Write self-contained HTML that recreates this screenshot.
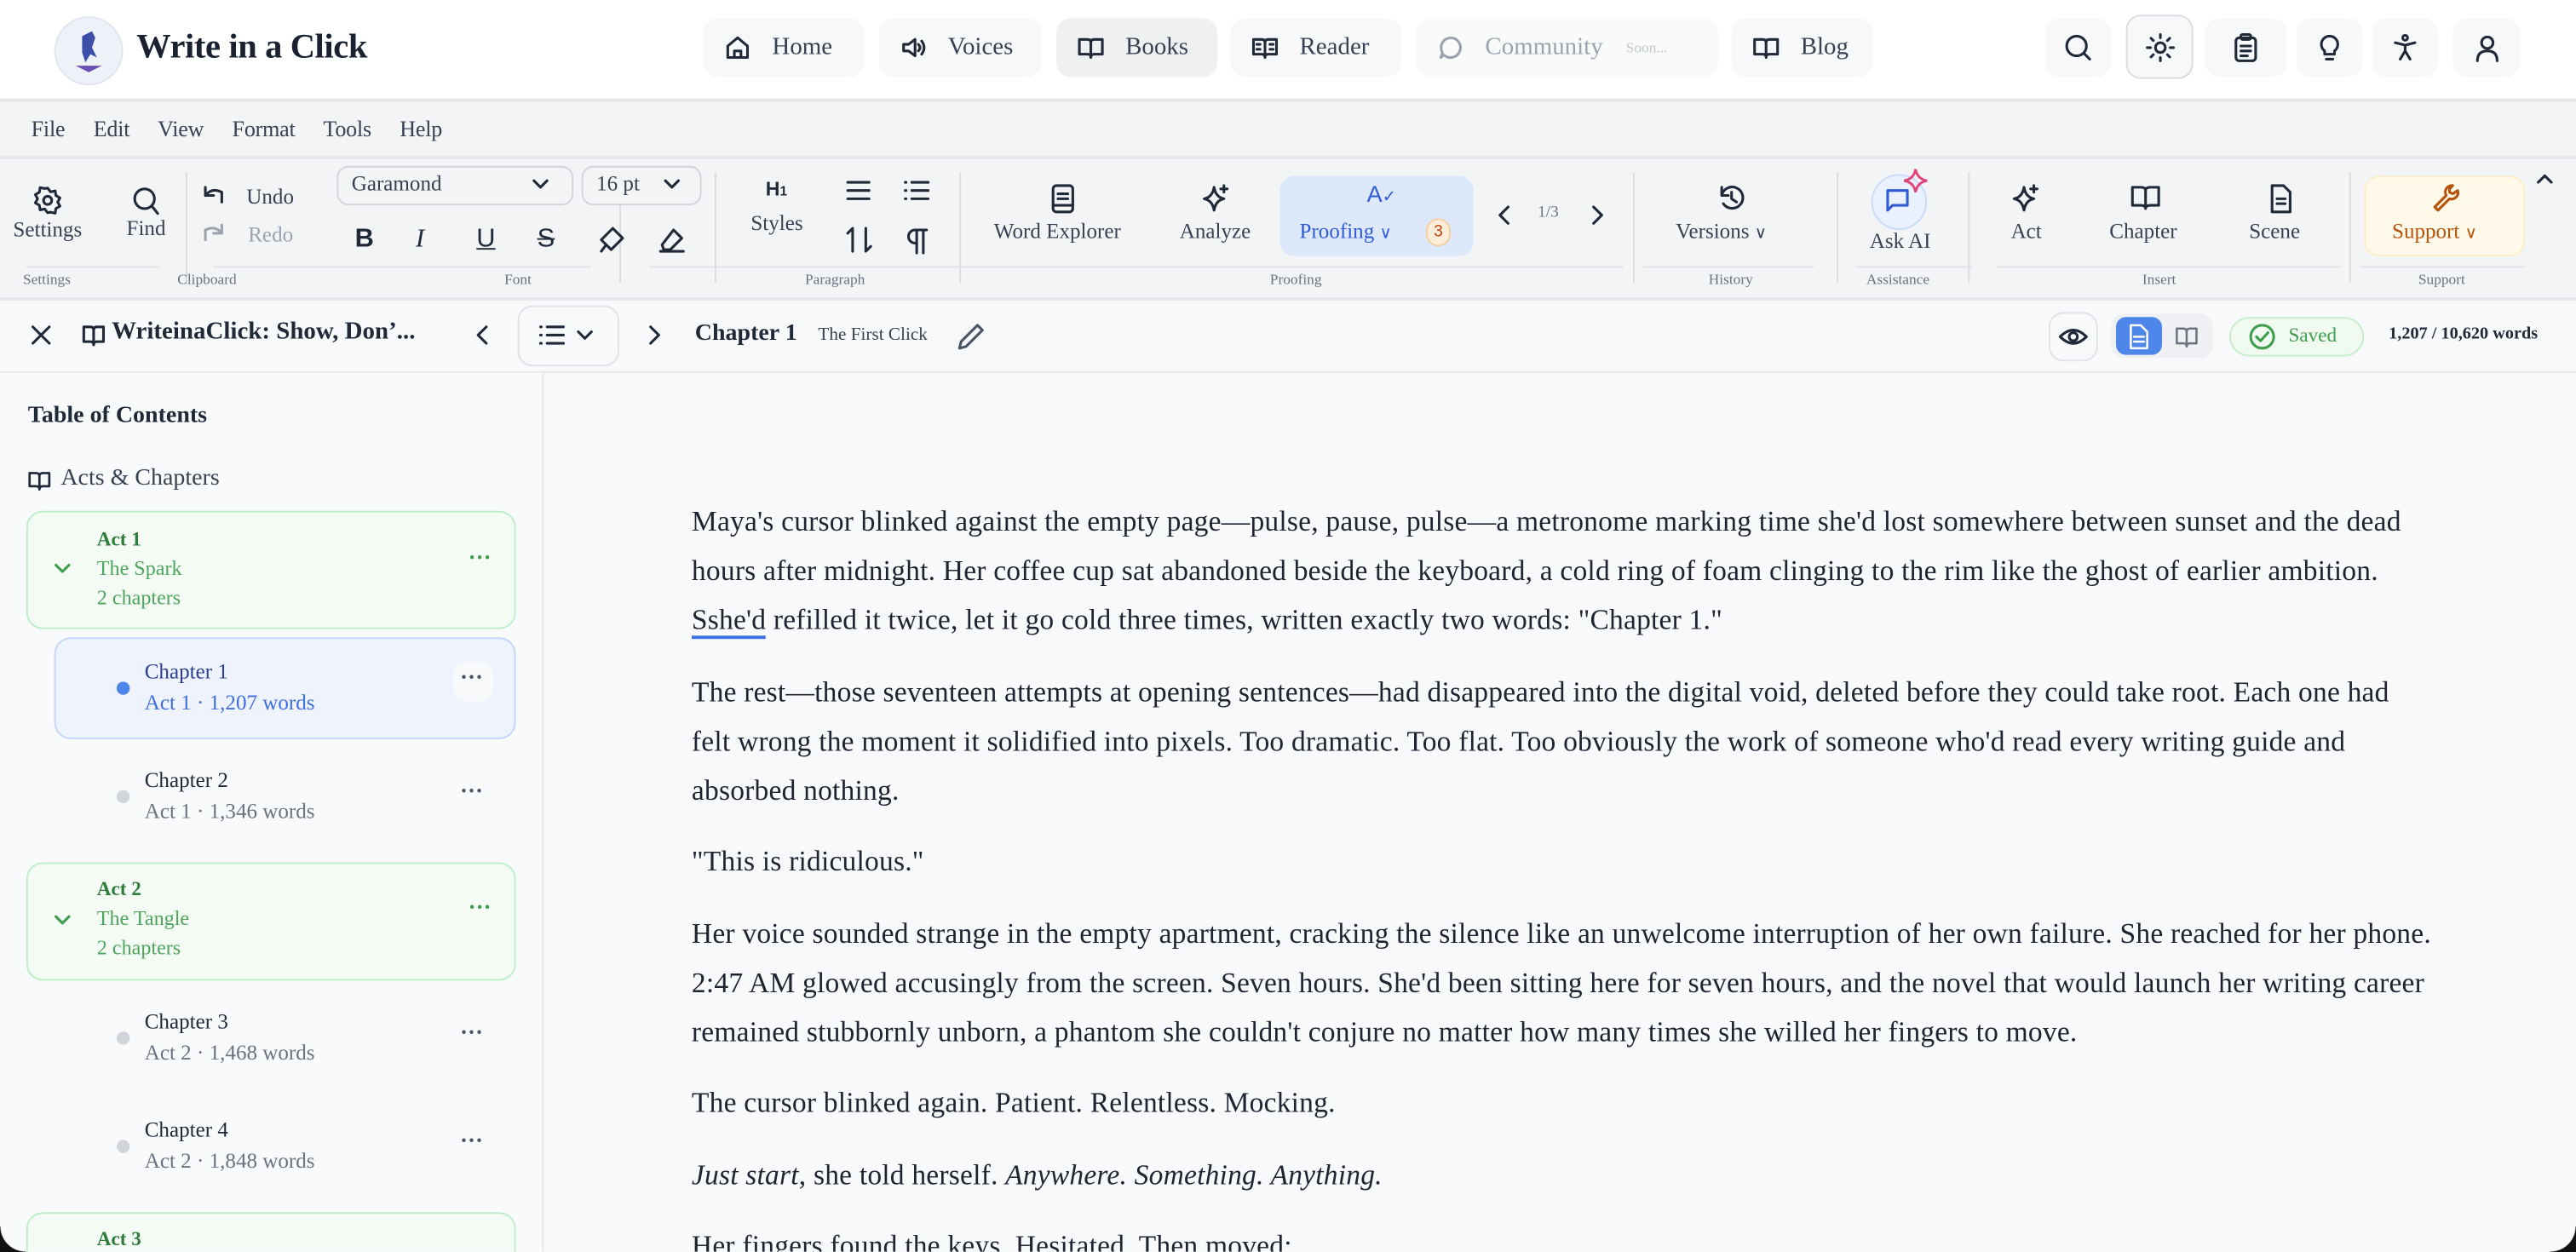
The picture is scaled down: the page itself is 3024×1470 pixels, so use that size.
<!DOCTYPE html>
<html><head><meta charset="utf-8">
<style>
*{box-sizing:border-box;margin:0;padding:0}
html,body{width:3024px;height:1470px;overflow:hidden;background:#f8f9fb}
#w{position:absolute;left:0;top:0;width:1568px;height:762px;transform:scale(1.928571);transform-origin:0 0;font-family:"Liberation Sans",sans-serif;color:#1f2937;background:#f8f9fb;border-radius:0 0 14px 14px;overflow:hidden}
.a{position:absolute}
svg{display:block}
.ic{fill:none;stroke:#1f2937;stroke-width:1.6;stroke-linecap:round;stroke-linejoin:round}
.pill{position:absolute;top:11px;height:36px;border-radius:9px;background:#f7f8fa;display:flex;align-items:center;padding-left:13px;font-size:15px;color:#374151;font-family:"Liberation Serif",serif}
.pill svg{margin-right:13px}
.rb{position:absolute;top:11px;width:40px;height:36px;border-radius:9px;background:#f7f8fa;display:flex;align-items:center;justify-content:center}
.tb{font-family:"Liberation Serif",serif;font-size:13px;color:#374151}
.gl{position:absolute;top:165px;font-size:9px;color:#6b7280;font-family:"Liberation Serif",serif}
.sep{position:absolute;top:105px;width:1px;height:67px;background:#d9dce1}
.line{position:absolute;top:162px;height:1px;background:#dfe2e6}
.doc p{font-family:"Liberation Serif",serif;font-size:17.4px;line-height:30px;color:#1f2430;white-space:nowrap;margin-bottom:13.5px;letter-spacing:0.1px}
.side{font-family:"Liberation Serif",serif}
.dots{position:absolute;font-size:14px;letter-spacing:0;color:#4b5563;font-weight:bold}
</style></head><body><div id="w">
<!-- NAV -->
<div class="a" style="left:0;top:0;width:1568px;height:62px;background:#fff;border-bottom:2px solid #e5e7eb"></div>
<div class="a" style="left:33px;top:10px;width:42px;height:42px;border-radius:50%;background:#eef1f7;border:1px solid #e1e5ee"></div>
<svg class="a" style="left:42px;top:16px" width="24" height="30"><path d="M8 6 l6 -3 l2 4 l-2 6 l3 6 l-4 -2 l-3 5 l-2 -6 z" fill="#3b4fa8"/><path d="M4 24 h16 l-8 4z" fill="#6a4fb6"/></svg>
<div class="a" style="left:83px;top:16px;font-family:'Liberation Serif',serif;font-size:21px;font-weight:bold;color:#1a2130;letter-spacing:-0.2px">Write in a Click</div>
<div class="pill" style="left:428px;width:98px"><svg width="16" height="16" class="ic"><path d="M2 7 L8 2 L14 7 V14 H2 Z M6 14 V10 H10 V14"/></svg>Home</div>
<div class="pill" style="left:535px;width:99px"><svg width="16" height="16" class="ic"><path d="M2 6 H5 L9 3 V13 L5 10 H2 Z M11 6 Q13 8 11 10 M13 4 Q16 8 13 12"/></svg>Voices</div>
<div class="pill" style="left:643px;width:98px;background:#eff0f2"><svg width="16" height="16" class="ic"><path d="M1 3 H6 Q8 3 8 5 V14 Q8 12 6 12 H1Z M15 3 H10 Q8 3 8 5 V14 Q8 12 10 12 H15Z"/></svg>Books</div>
<div class="pill" style="left:749px;width:104px"><svg width="16" height="16" class="ic"><path d="M1 3 H6 Q8 3 8 5 V14 Q8 12 6 12 H1Z M15 3 H10 Q8 3 8 5 V14 Q8 12 10 12 H15Z M3 6H5 M3 9H5 M11 6H13 M11 9H13"/></svg>Reader</div>
<div class="pill" style="left:862px;width:184px;background:#f9fafa;color:#9ca3af"><svg width="16" height="16" class="ic" style="stroke:#9ca3af"><path d="M8 2 A6 6 0 1 1 4 12.5 L2 14 L3 11 A6 6 0 0 1 8 2Z"/></svg>Community<span style="font-size:9px;margin-left:14px;color:#c0c4ca">Soon...</span></div>
<div class="pill" style="left:1054px;width:86px"><svg width="16" height="16" class="ic"><path d="M1 3 H6 Q8 3 8 5 V14 Q8 12 6 12 H1Z M15 3 H10 Q8 3 8 5 V14 Q8 12 10 12 H15Z"/></svg>Blog</div>
<div class="rb" style="left:1245px"><svg width="18" height="18" class="ic"><circle cx="8" cy="8" r="6"/><path d="M12.5 12.5 L16 16"/></svg></div>
<div class="rb" style="left:1294px;width:41px;height:39px;top:9px;border:1px solid #d9dce1;background:#f7f8fa"><svg width="18" height="18" class="ic"><circle cx="9" cy="9" r="3"/><path d="M9 1v2M9 15v2M1 9h2M15 9h2M3.3 3.3l1.4 1.4M13.3 13.3l1.4 1.4M3.3 14.7l1.4-1.4M13.3 4.7l1.4-1.4"/></svg></div>
<div class="rb" style="left:1342px;width:50px"><svg width="18" height="18" class="ic"><rect x="3" y="3" width="12" height="14" rx="2"/><rect x="6" y="1" width="6" height="3" rx="1"/><path d="M6 8h6M6 11h6M6 14h4"/></svg></div>
<div class="rb" style="left:1398px"><svg width="18" height="18" class="ic"><path d="M6 11 A5 5 0 1 1 12 11 V13 H6Z M7 16h4"/></svg></div>
<div class="rb" style="left:1444px"><svg width="18" height="18" class="ic"><circle cx="9" cy="3" r="1.5"/><path d="M3 6 L9 7.5 L15 6 M9 7.5 V11 L6 16 M9 11 L12 16"/></svg></div>
<div class="rb" style="left:1493px;width:41px"><svg width="18" height="18" class="ic"><circle cx="9" cy="6" r="3.5"/><path d="M3 17 Q3 11 9 11 Q15 11 15 17"/></svg></div>
<!-- MENU -->
<div class="a" style="left:0;top:62px;width:1568px;height:120px;background:#f3f4f6"></div>
<div class="a" style="left:0;top:95px;width:1568px;height:2px;background:#e5e7eb"></div>
<div class="a tb" style="left:19px;top:71px;word-spacing:14px;font-size:13.5px;letter-spacing:-0.1px">File Edit View Format Tools Help</div>
<!-- TOOLBAR -->
<svg class="a ic" style="left:20px;top:113px" width="18" height="18"><circle cx="9" cy="9" r="2.5"/><path d="M9 1.5 l1.8 2.3 2.8-.6.4 2.8 2.5 1.5-1.4 2.5 1.4 2.5-2.5 1.5-.4 2.8-2.8-.6L9 16.5l-1.8-2.3-2.8.6-.4-2.8-2.5-1.5L2.9 8 1.5 5.5 4 4l.4-2.8 2.8.6z"/></svg>
<div class="a tb" style="left:8px;top:132px">Settings</div>
<div class="gl" style="left:14px">Settings</div>
<div class="line" style="left:16px;width:81px"></div>
<div class="sep" style="left:113px"></div>
<svg class="a ic" style="left:79px;top:112px" width="20" height="20"><circle cx="9" cy="9" r="6"/><path d="M13.5 13.5 L17 18"/></svg>
<div class="a tb" style="left:77px;top:131px">Find</div>
<svg class="a ic" style="left:121px;top:111px" width="18" height="16"><path d="M4 3 V8 H9 M4 8 Q8 3 14 6 V12"/></svg>
<div class="a tb" style="left:150px;top:112px">Undo</div>
<svg class="a ic" style="left:121px;top:134px;stroke:#9ca3af" width="18" height="16"><path d="M14 3 V8 H9 M14 8 Q10 3 4 6 V12"/></svg>
<div class="a tb" style="left:151px;top:135px;color:#9ca3af">Redo</div>
<div class="gl" style="left:108px">Clipboard</div>
<div class="line" style="left:130px;width:230px"></div>
<div class="sep" style="left:377px"></div>
<div class="a" style="left:205px;top:101px;width:144px;height:24px;border:1px solid #d1d5db;border-radius:7px;background:#f3f4f6"></div>
<div class="a tb" style="left:214px;top:104px">Garamond</div>
<svg class="a ic" style="left:323px;top:107px" width="12" height="10"><path d="M2 3 L6 7 L10 3"/></svg>
<div class="a" style="left:354px;top:101px;width:73px;height:24px;border:1px solid #d1d5db;border-radius:7px;background:#f3f4f6"></div>
<div class="a tb" style="left:363px;top:104px">16 pt</div>
<svg class="a ic" style="left:403px;top:107px" width="12" height="10"><path d="M2 3 L6 7 L10 3"/></svg>
<div class="a" style="left:216px;top:137px;font-size:16px;font-weight:bold;font-family:'Liberation Sans'">B</div>
<div class="a" style="left:253px;top:137px;font-size:16px;font-style:italic;font-family:'Liberation Serif'">I</div>
<div class="a" style="left:290px;top:137px;font-size:16px;text-decoration:underline">U</div>
<div class="a" style="left:327px;top:137px;font-size:16px;text-decoration:line-through">S</div>
<svg class="a ic" style="left:363px;top:137px" width="18" height="18"><path d="M10 2 L16 8 L9 15 L3 9Z M6 12 L3 16"/></svg>
<svg class="a ic" style="left:400px;top:137px" width="18" height="18"><path d="M10 3 L15 8 L8 15 H4 L3 12Z M2 16 H16"/></svg>
<div class="gl" style="left:307px">Font</div>
<div class="line" style="left:395px;width:430px"></div>
<div class="sep" style="left:435px"></div>
<div class="a" style="left:466px;top:108px;font-size:12px;font-weight:bold">H<span style="font-size:8px">1</span></div>
<div class="a tb" style="left:457px;top:128px">Styles</div>
<svg class="a ic" style="left:514px;top:108px" width="18" height="16"><path d="M2 3h13M2 8h13M2 13h13"/></svg>
<svg class="a ic" style="left:549px;top:108px" width="18" height="16"><path d="M6 3h10M6 8h10M6 13h10M2 3h.5M2 8h.5M2 13h.5"/></svg>
<svg class="a ic" style="left:514px;top:137px" width="18" height="18"><path d="M5 16 V2 L2 5 M13 2 V16 L16 13"/></svg>
<svg class="a ic" style="left:549px;top:138px" width="18" height="18"><path d="M13 2 V16 M9 2 V16 M15 2 H8 A4 4 0 0 0 8 10 H9"/></svg>
<div class="gl" style="left:490px">Paragraph</div>
<div class="line" style="left:445px;width:130px"></div>
<div class="sep" style="left:584px"></div>
<svg class="a ic" style="left:638px;top:111px" width="18" height="20"><rect x="3" y="2" width="12" height="16" rx="2"/><path d="M6 7h6M6 10h6M3 14h12"/></svg>
<div class="a tb" style="left:605px;top:133px">Word Explorer</div>
<svg class="a ic" style="left:731px;top:111px" width="18" height="18"><path d="M8 3 Q9 9 14 10 Q9 11 8 17 Q7 11 2 10 Q7 9 8 3Z M14 2v4M12 4h4"/></svg>
<div class="a tb" style="left:718px;top:133px">Analyze</div>
<div class="a" style="left:779px;top:107px;width:118px;height:49px;background:#dde8fb;border-radius:9px"></div>
<div class="a" style="left:832px;top:110px;font-size:14px;color:#2f5bd6">A<span style="font-size:10px">&#x2713;</span></div>
<div class="a tb" style="left:791px;top:133px;color:#2f5bd6">Proofing <span style="font-size:10px">&#x2228;</span></div>
<div class="a" style="left:868px;top:133px;width:15px;height:17px;border-radius:8px;background:#fdeedc;border:1px solid #f6cf9e;color:#c2410c;font-size:10px;text-align:center;line-height:15px">3</div>
<svg class="a ic" style="left:910px;top:124px" width="12" height="14"><path d="M8 2 L3 7 L8 12"/></svg>
<div class="a" style="left:936px;top:124px;font-size:10px;color:#6b7280;font-family:'Liberation Serif'">1/3</div>
<svg class="a ic" style="left:966px;top:124px" width="12" height="14"><path d="M4 2 L9 7 L4 12"/></svg>
<div class="gl" style="left:773px">Proofing</div>
<div class="line" style="left:570px;width:418px"></div>
<div class="sep" style="left:994px"></div>
<svg class="a ic" style="left:1045px;top:111px" width="18" height="18"><path d="M3 8 A6.5 6.5 0 1 1 4 13 M3 3 V8 H7 M9 6 V10 L12 12"/></svg>
<div class="a tb" style="left:1020px;top:133px">Versions <span style="font-size:10px">&#x2228;</span></div>
<div class="gl" style="left:1040px">History</div>
<div class="line" style="left:1000px;width:104px"></div>
<div class="sep" style="left:1118px"></div>
<div class="a" style="left:1139px;top:106px;width:34px;height:34px;border-radius:50%;background:#eaf1fe;border:1px solid #c9dafb"></div>
<svg class="a ic" style="left:1147px;top:113px;stroke:#2f5bd6" width="18" height="18"><path d="M2 3 H14 V12 H5 L2 15Z"/></svg>
<svg class="a" style="left:1158px;top:102px" width="16" height="16"><path d="M8 1 Q9 7 15 8 Q9 9 8 15 Q7 9 1 8 Q7 7 8 1Z" fill="none" stroke="#e0457b" stroke-width="1.5"/></svg>
<div class="a tb" style="left:1138px;top:139px">Ask AI</div>
<div class="gl" style="left:1136px">Assistance</div>
<div class="line" style="left:1130px;width:70px"></div>
<div class="sep" style="left:1198px"></div>
<svg class="a ic" style="left:1224px;top:111px" width="18" height="18"><path d="M8 3 Q9 9 14 10 Q9 11 8 17 Q7 11 2 10 Q7 9 8 3Z M14 2v4M12 4h4"/></svg>
<div class="a tb" style="left:1224px;top:133px">Act</div>
<svg class="a ic" style="left:1297px;top:111px" width="18" height="18"><path d="M1 3 H6 Q9 3 9 5 V16 Q9 14 6 14 H1Z M17 3 H12 Q9 3 9 5 V16 Q9 14 12 14 H17Z"/></svg>
<div class="a tb" style="left:1284px;top:133px">Chapter</div>
<svg class="a ic" style="left:1379px;top:111px" width="18" height="20"><path d="M4 2 H11 L15 6 V18 H4Z M7 10h5M7 13h5"/></svg>
<div class="a tb" style="left:1369px;top:133px">Scene</div>
<div class="gl" style="left:1304px">Insert</div>
<div class="line" style="left:1215px;width:210px"></div>
<div class="sep" style="left:1430px"></div>
<div class="a" style="left:1439px;top:107px;width:98px;height:49px;background:#fef9e9;border:1px solid #fbeec6;border-radius:9px"></div>
<svg class="a ic" style="left:1479px;top:111px;stroke:#b45309" width="18" height="18"><path d="M14 2 A4 4 0 0 0 10 8 L3 15 L5 17 L12 10 A4 4 0 0 0 17 5 L14 7 L12 6 L12 4Z"/></svg>
<div class="a tb" style="left:1456px;top:133px;color:#b45309">Support <span style="font-size:10px">&#x2228;</span></div>
<div class="gl" style="left:1472px">Support</div>
<div class="line" style="left:1437px;width:100px"></div>
<svg class="a ic" style="left:1543px;top:104px" width="12" height="10"><path d="M2 7 L6 3 L10 7"/></svg>
<div class="a" style="left:0;top:181px;width:1568px;height:2px;background:#e5e7eb"></div>
<!-- CHAPTER BAR -->
<div class="a" style="left:0;top:226px;width:1568px;height:1px;background:#e5e7eb"></div>
<div class="a" style="left:9px;top:188px;width:32px;height:32px;border-radius:8px;background:#f8f9fb"></div>
<svg class="a ic" style="left:17px;top:196px" width="16" height="16"><path d="M3 3 L13 13 M13 3 L3 13"/></svg>
<svg class="a ic" style="left:50px;top:197px" width="14" height="14"><path d="M1 2 H5 Q7 2 7 4 V13 Q7 11 5 11 H1Z M13 2 H9 Q7 2 7 4 V13 Q7 11 9 11 H13Z"/></svg>
<div class="a" style="left:68px;top:194px;font-size:15px;font-weight:bold;font-family:'Liberation Serif',serif;color:#1f2937">WriteinaClick: Show, Don’...</div>
<div class="a" style="left:289px;top:198px;font-size:11px;color:#9ca3af">&gt;</div>
<div class="a" style="left:278px;top:188px;width:32px;height:32px;border-radius:8px;background:#f8f9fb"></div>
<svg class="a ic" style="left:288px;top:197px" width="12" height="14"><path d="M8 2 L3 7 L8 12"/></svg>
<div class="a" style="left:315px;top:186px;width:62px;height:37px;border-radius:9px;background:#f8f9fb;border:1px solid #dfe2e6"></div>
<svg class="a ic" style="left:328px;top:197px" width="16" height="14"><path d="M5 2h10M5 7h10M5 12h10M1 2h.5M1 7h.5M1 12h.5"/></svg>
<svg class="a ic" style="left:350px;top:199px" width="12" height="10"><path d="M2 3 L6 7 L10 3"/></svg>
<div class="a" style="left:382px;top:188px;width:32px;height:32px;border-radius:8px;background:#f8f9fb"></div>
<svg class="a ic" style="left:392px;top:197px" width="12" height="14"><path d="M4 2 L9 7 L4 12"/></svg>
<div class="a" style="left:423px;top:195px;font-size:14.5px;font-weight:bold;font-family:'Liberation Serif',serif">Chapter 1</div>
<div class="a" style="left:498px;top:198px;font-size:11px;font-family:'Liberation Serif',serif;color:#374151">The First Click</div>
<div class="a" style="left:574px;top:187px;width:32px;height:36px;border-radius:9px;background:#f7f8fa"></div>
<svg class="a ic" style="left:582px;top:196px;stroke:#4b5563" width="18" height="18"><path d="M13 2 L16 5 L6 15 L2 16 L3 12Z"/></svg>
<div class="a" style="left:1247px;top:190px;width:30px;height:30px;border-radius:9px;background:#f8f9fb;border:1px solid #dfe2e6"></div>
<svg class="a ic" style="left:1253px;top:197px" width="18" height="16"><path d="M1 8 Q9 0 17 8 Q9 16 1 8Z"/><circle cx="9" cy="8" r="2.5"/></svg>
<div class="a" style="left:1285px;top:191px;width:62px;height:27px;border-radius:8px;background:#eef0f3"></div>
<div class="a" style="left:1288px;top:193px;width:28px;height:23px;border-radius:6px;background:#4f86ea"></div>
<svg class="a ic" style="left:1295px;top:197px;stroke:#fff;stroke-width:1.3" width="14" height="16"><path d="M2 1 H8 L12 5 V15 H2Z M4 8h6M4 11h6"/></svg>
<svg class="a ic" style="left:1324px;top:198px;stroke:#6b7280;stroke-width:1.3" width="14" height="14"><path d="M1 2 H5 Q7 2 7 4 V13 Q7 11 5 11 H1Z M13 2 H9 Q7 2 7 4 V13 Q7 11 9 11 H13Z"/></svg>
<div class="a" style="left:1357px;top:193px;width:82px;height:24px;border-radius:12px;background:#f0faf1;border:1px solid #c6eccc"></div>
<svg class="a ic" style="left:1368px;top:196px;stroke:#3f9e4d" width="18" height="18"><circle cx="9" cy="9" r="7"/><path d="M5.5 9 L8 11.5 L12.5 6.5"/></svg>
<div class="a" style="left:1393px;top:197px;font-size:12px;color:#3f9e4d;font-family:'Liberation Serif',serif">Saved</div>
<div class="a" style="left:1454px;top:198px;font-size:10.5px;color:#1f2937;font-family:'Liberation Serif',serif;font-weight:bold">1,207 / 10,620 words</div>
<!-- SIDEBAR -->
<div class="a side" style="left:0;top:227px;width:331px;height:535px;background:#f9fafb;border-right:1px solid #e5e7eb">
 <div class="a" style="left:17px;top:18px;font-size:14.5px;font-weight:bold;color:#1f2937">Table of Contents</div>
 <svg class="a ic" style="left:17px;top:59px;stroke-width:1.4" width="14" height="13"><path d="M1 2 H5 Q7 2 7 4 V12 Q7 10 5 10 H1Z M13 2 H9 Q7 2 7 4 V12 Q7 10 9 10 H13Z"/></svg>
 <div class="a" style="left:37px;top:56px;font-size:14.5px;color:#374151">Acts &amp; Chapters</div>
 <div class="a" style="left:16px;top:84px;width:298px;height:72px;border:1.5px solid #bdeec8;border-radius:10px;background:#f4fbf5"></div>
 <svg class="a ic" style="left:32px;top:114px;stroke:#3f9e4d" width="12" height="10"><path d="M2 3 L6 7 L10 3"/></svg>
 <div class="a" style="left:59px;top:94px;font-size:12px;color:#2f7d3b;font-weight:bold">Act 1</div>
 <div class="a" style="left:59px;top:112px;font-size:12.5px;color:#4ea55c">The Spark</div>
 <div class="a" style="left:59px;top:130px;font-size:12.5px;color:#4ea55c">2 chapters</div>
 <div class="dots" style="left:285px;top:106px;color:#3f9e4d">&middot;&middot;&middot;</div>
 <div class="a" style="left:33px;top:161px;width:281px;height:62px;border:1.5px solid #c4d6f7;border-radius:10px;background:#eef3fe"></div>
 <div class="a" style="left:71px;top:188px;width:8px;height:8px;border-radius:50%;background:#4f86ea"></div>
 <div class="a" style="left:88px;top:174px;font-size:13px;color:#2c3e8f">Chapter 1</div>
 <div class="a" style="left:88px;top:193px;font-size:13px;color:#3f6fdc">Act 1 · 1,207 words</div>
 <div class="a" style="left:276px;top:176px;width:24px;height:24px;border-radius:7px;background:#f8f9fb"></div>
 <div class="dots" style="left:280px;top:179px">&middot;&middot;&middot;</div>
 <div class="a" style="left:71px;top:254px;width:8px;height:8px;border-radius:50%;background:#d1d5db"></div>
 <div class="a" style="left:88px;top:240px;font-size:13px;color:#1f2937">Chapter 2</div>
 <div class="a" style="left:88px;top:259px;font-size:13px;color:#6b7280">Act 1 · 1,346 words</div>
 <div class="dots" style="left:280px;top:248px">&middot;&middot;&middot;</div>
 <div class="a" style="left:16px;top:298px;width:298px;height:72px;border:1.5px solid #bdeec8;border-radius:10px;background:#f4fbf5"></div>
 <svg class="a ic" style="left:32px;top:328px;stroke:#3f9e4d" width="12" height="10"><path d="M2 3 L6 7 L10 3"/></svg>
 <div class="a" style="left:59px;top:307px;font-size:12px;color:#2f7d3b;font-weight:bold">Act 2</div>
 <div class="a" style="left:59px;top:325px;font-size:12.5px;color:#4ea55c">The Tangle</div>
 <div class="a" style="left:59px;top:343px;font-size:12.5px;color:#4ea55c">2 chapters</div>
 <div class="dots" style="left:285px;top:319px;color:#3f9e4d">&middot;&middot;&middot;</div>
 <div class="a" style="left:71px;top:401px;width:8px;height:8px;border-radius:50%;background:#d1d5db"></div>
 <div class="a" style="left:88px;top:387px;font-size:13px;color:#1f2937">Chapter 3</div>
 <div class="a" style="left:88px;top:406px;font-size:13px;color:#6b7280">Act 2 · 1,468 words</div>
 <div class="dots" style="left:280px;top:395px">&middot;&middot;&middot;</div>
 <div class="a" style="left:71px;top:467px;width:8px;height:8px;border-radius:50%;background:#d1d5db"></div>
 <div class="a" style="left:88px;top:453px;font-size:13px;color:#1f2937">Chapter 4</div>
 <div class="a" style="left:88px;top:472px;font-size:13px;color:#6b7280">Act 2 · 1,848 words</div>
 <div class="dots" style="left:280px;top:461px">&middot;&middot;&middot;</div>
 <div class="a" style="left:16px;top:511px;width:298px;height:60px;border:1.5px solid #bdeec8;border-radius:10px;background:#f4fbf5"></div>
 <div class="a" style="left:59px;top:520px;font-size:12px;color:#2f7d3b;font-weight:bold">Act 3</div>
</div>
<!-- DOC -->
<div class="a doc" style="left:421px;top:302px">
<p>Maya's cursor blinked against the empty page—pulse, pause, pulse—a metronome marking time she'd lost somewhere between sunset and the dead<br>hours after midnight. Her coffee cup sat abandoned beside the keyboard, a cold ring of foam clinging to the rim like the ghost of earlier ambition.<br><span style="border-bottom:2px solid #3b6fe0">Sshe'd</span> refilled it twice, let it go cold three times, written exactly two words: "Chapter 1."</p>
<p>The rest—those seventeen attempts at opening sentences—had disappeared into the digital void, deleted before they could take root. Each one had<br>felt wrong the moment it solidified into pixels. Too dramatic. Too flat. Too obviously the work of someone who'd read every writing guide and<br>absorbed nothing.</p>
<p>"This is ridiculous."</p>
<p>Her voice sounded strange in the empty apartment, cracking the silence like an unwelcome interruption of her own failure. She reached for her phone.<br>2:47 AM glowed accusingly from the screen. Seven hours. She'd been sitting here for seven hours, and the novel that would launch her writing career<br>remained stubbornly unborn, a phantom she couldn't conjure no matter how many times she willed her fingers to move.</p>
<p>The cursor blinked again. Patient. Relentless. Mocking.</p>
<p><i>Just start</i>, she told herself. <i>Anywhere. Something. Anything.</i></p>
<p>Her fingers found the keys. Hesitated. Then moved:</p>
</div>
</div>
<div style="position:absolute;left:0;top:1440px;width:30px;height:30px;background:radial-gradient(circle at 30px 0,transparent 29px,#111 30px)"></div>
<div style="position:absolute;left:2994px;top:1440px;width:30px;height:30px;background:radial-gradient(circle at 0 0,transparent 29px,#111 30px)"></div>
</body></html>
